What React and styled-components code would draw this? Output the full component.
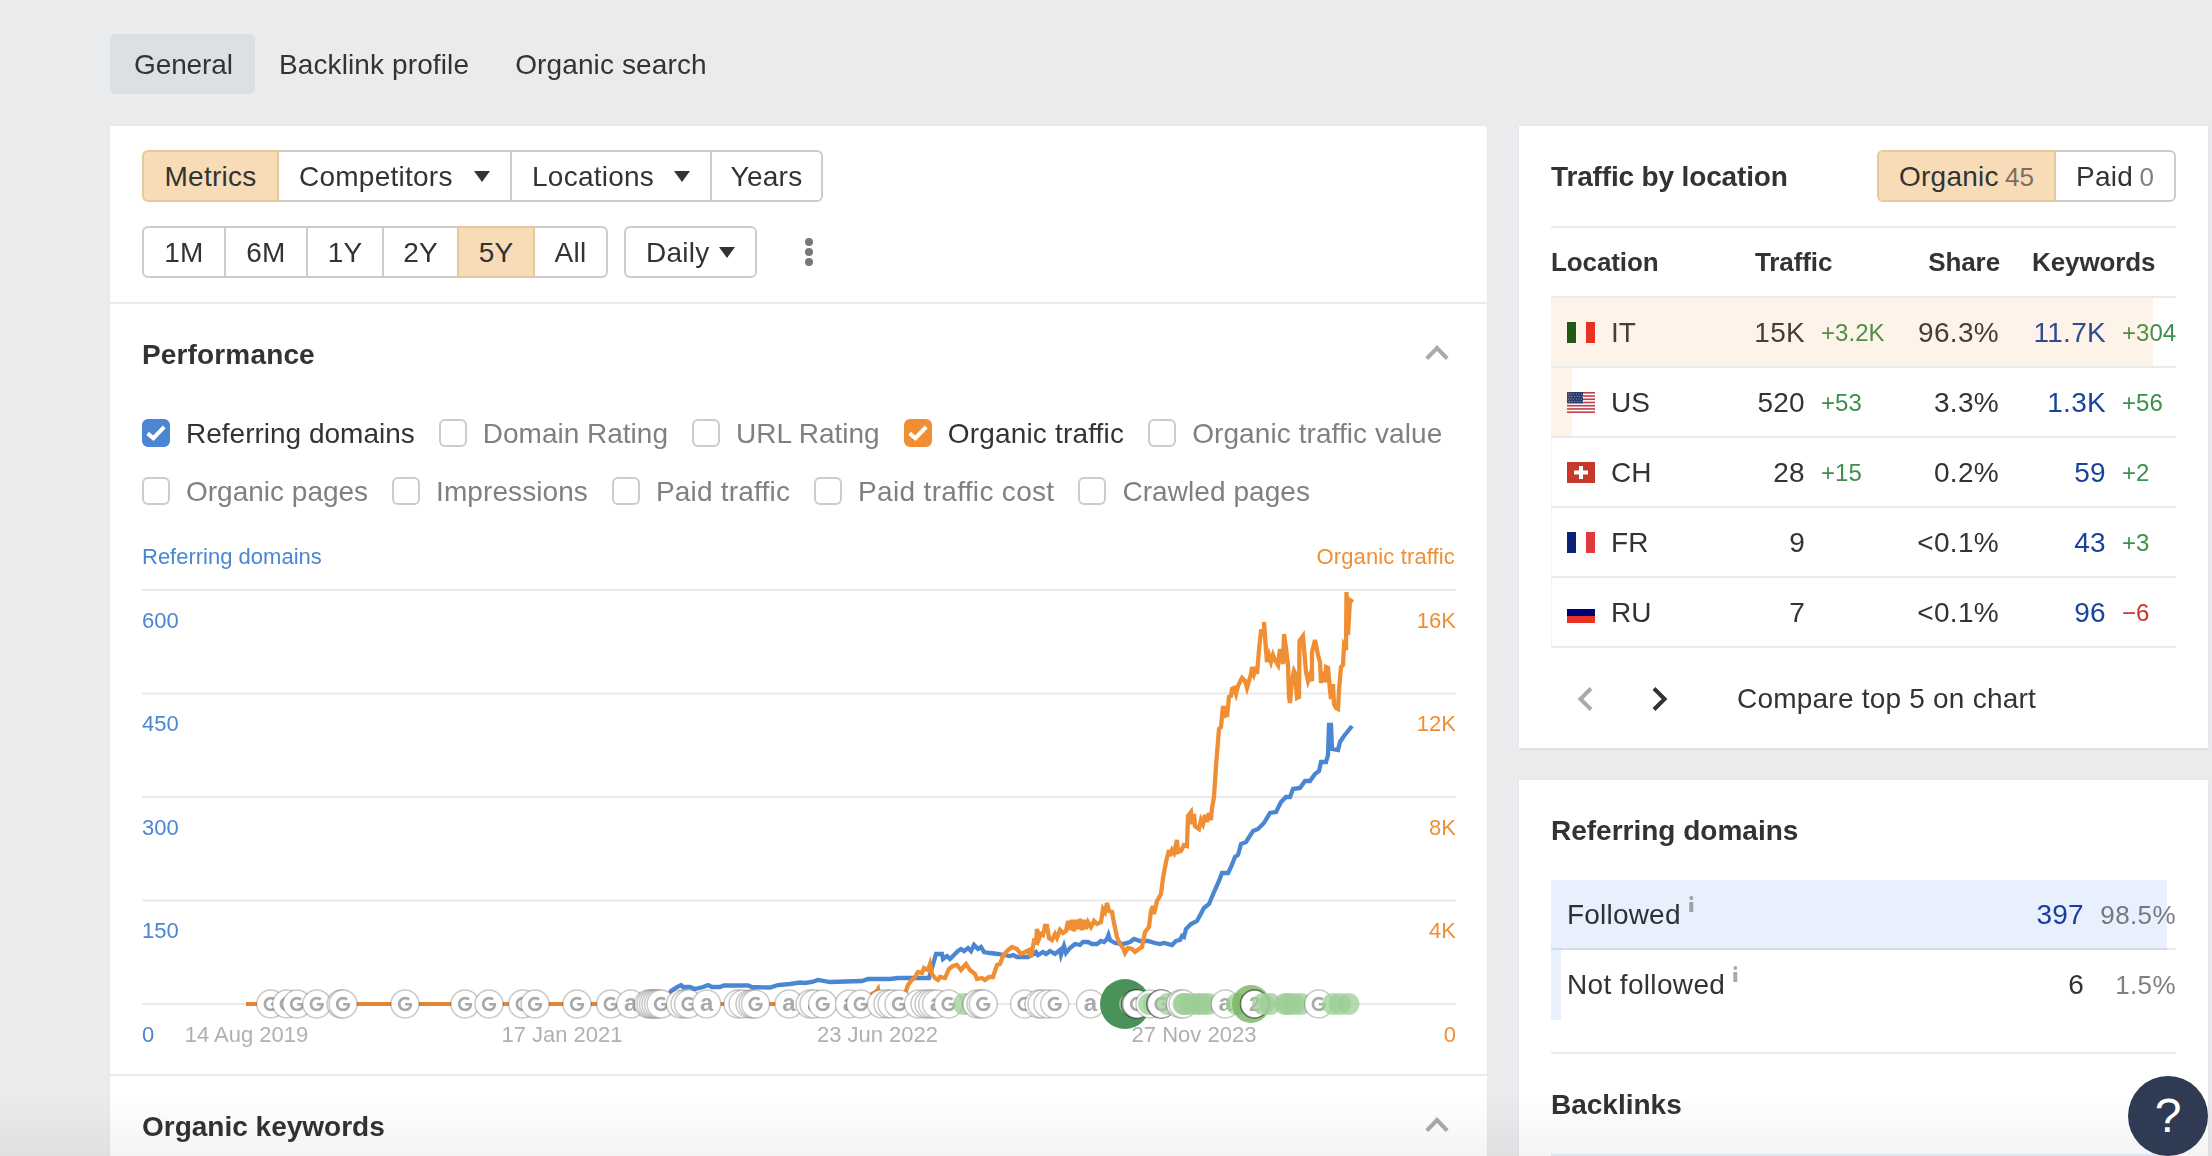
import React from 'react';
import styled, { css, createGlobalStyle } from 'styled-components';
import { FaGoogle } from 'react-icons/fa';

const GlobalStyle = createGlobalStyle`
	* {
		box-sizing: border-box;
	}
	body {
		margin: 0;
		overflow: hidden;
		background: #eaebed;
		color: #333;
		font-family: 'Liberation Sans', Arial, sans-serif;
		font-size: 28px;
		line-height: 32px;
		font-variant-ligatures: none;
		letter-spacing: 0.05px;
	}
	button {
		font: inherit;
		color: inherit;
		letter-spacing: inherit;
	}
	svg {
		display: block;
		flex-shrink: 0;
	}
`;

const Page = styled.div`
	height: 1156px;
	overflow: hidden;
	padding: 34px 4px 0 110px;
`;

const Tabs = styled.nav`
	display: flex;
	margin-bottom: 32px;
`;

const Tab = styled.a`
	height: 60px;
	padding: 0 22px 0 24px;
	line-height: 61px;
	letter-spacing: ${(props) => (props.$active ? -0.1 : 0.12)}px;
	border-radius: 5px;
	white-space: nowrap;
	background: ${(props) => (props.$active ? '#dcdfe4' : 'transparent')};
`;

const Columns = styled.div`
	display: grid;
	grid-template-columns: 1377px 689px;
	justify-content: space-between;
	align-items: start;
`;

const Side = styled.div`
	display: flex;
	flex-direction: column;
	gap: 32px;
`;

const Card = styled.section`
	background: #fff;
	box-shadow: 0 2px 0 #dfe0e2, 0 0 0 1px #e6e7ea;
`;

const Toolbar = styled.div`
	display: flex;
	flex-direction: column;
	gap: 24px;
	padding: 24px 32px;
	border-bottom: 2px solid #e9eaeb;
`;

const ToolbarRow = styled.div`
	display: flex;
	align-items: center;
	gap: 16px;
`;

const Segment = styled.div`
	display: flex;
`;

const SegmentButton = styled.button`
	position: relative;
	display: flex;
	align-items: center;
	justify-content: ${(props) => (props.$spread ? 'space-between' : 'center')};
	width: ${(props) => props.$width}px;
	height: 52px;
	padding: 1px 20px 0;
	border: 2px solid #ccc;
	background: #fff;
	white-space: nowrap;
	letter-spacing: 0.25px;

	& + & {
		margin-left: -2px;
	}
	&:first-child {
		border-radius: 6px 0 0 6px;
	}
	&:last-child {
		border-radius: 0 6px 6px 0;
	}
	&:only-child {
		border-radius: 6px;
	}
	${(props) =>
		props.$active &&
		css`
			z-index: 1;
			background: #f8dcb8;
			border-color: #e5c7a0;
		`}
`;

const Count = styled.span`
	font-size: 26px;
	letter-spacing: 0;
	color: ${(props) => (props.$active ? '#7d6f5d' : '#808080')};
`;

const DotsButton = styled.button`
	border: 0;
	background: none;
	padding: 0;
	margin-left: 32px;
`;

const SectionHeader = styled.header`
	display: flex;
	align-items: center;
	justify-content: space-between;
	height: 100px;
	padding: 0 38px 0 32px;

	svg {
		margin-bottom: 3px;
	}
`;

const Title = styled.h2`
	margin: 0;
	padding-top: 2px;
	font-size: 28px;
	line-height: 32px;
	letter-spacing: ${(props) => props.$spacing || 0}px;
`;

const Checks = styled.div`
	display: flex;
	flex-direction: column;
	gap: 30px;
	padding: 15px 32px 0;
`;

const CheckRow = styled.div`
	display: flex;
	gap: 24px;
`;

const Check = styled.label`
	display: flex;
	align-items: center;
	gap: 16px;
	height: 28px;
	white-space: nowrap;
	letter-spacing: ${(props) => props.$spacing || 0}px;
	color: ${(props) => (props.$color ? '#333' : '#808080')};
`;

const CheckText = styled.span`
	padding-top: 2px;
`;

const Box = styled.span`
	display: flex;
	align-items: center;
	justify-content: center;
	width: 28px;
	height: 28px;
	border-radius: 6px;
	border: 2px solid ${(props) => props.$color || '#ccc'};
	background: ${(props) => props.$color || '#fff'};
`;

const Legend = styled.div`
	display: flex;
	justify-content: space-between;
	margin-top: 36px;
	padding: 2px 32px 0;
	font-size: 22px;
	line-height: 28px;
	letter-spacing: 0;
`;

const Tone = styled.span`
	color: ${(props) => props.$color};
	letter-spacing: ${(props) => props.$spacing || 0}px;
`;

const ChartBox = styled.div`
	margin-top: -1px;
	padding: 0 32px 24px;
	border-bottom: 2px solid #e9eaeb;
`;

const SideHeader = styled.header`
	display: flex;
	align-items: center;
	justify-content: space-between;
	margin: 0 32px;
	padding: 24px 0;
	border-bottom: 2px solid #e9eaeb;
`;

const Table = styled.div`
	margin: 0 32px;
`;

const HeadRow = styled.div`
	display: grid;
	grid-template-columns: 204px 91px 154px 1fr;
	align-items: center;
	height: 70px;
	font-size: 26px;
	font-weight: 700;
	letter-spacing: -0.1px;
	border-bottom: 2px solid #e9eaeb;

	span:nth-child(3) {
		text-align: right;
	}
	span:nth-child(4) {
		padding-left: 32px;
	}
`;

const LocationRow = styled.div`
	position: relative;
	display: grid;
	grid-template-columns: 150px 104px 90px 104px 107px 70px;
	align-items: center;
	height: 70px;
	border-bottom: 2px solid #e9eaeb;
	white-space: nowrap;
`;

const LocationBar = styled.div`
	position: absolute;
	left: 0;
	top: 0;
	bottom: 0;
	background: rgba(240, 142, 50, 0.11);
`;

const Country = styled.div`
	display: flex;
	align-items: center;
	gap: 16px;
	padding-left: 16px;
`;

const CountryCode = styled.span`
	padding-top: 2px;
`;

const Value = styled.span`
	padding-top: 2px;
	text-align: right;
	letter-spacing: 0.3px;
	color: ${(props) => (props.$link ? '#1a439c' : '#333')};
`;

const Delta = styled.span`
	padding-left: 16px;
	padding-top: 2px;
	font-size: 24px;
	color: ${(props) => (props.$down ? '#c8352b' : '#3d8f4c')};
`;

const Pager = styled.div`
	display: flex;
	align-items: center;
	height: 100px;
	padding: 1px 0 0 58px;
`;

const PagerArrow = styled.button`
	border: 0;
	padding: 0;
	margin-right: 59px;
	background: none;
`;

const PagerLink = styled.a`
	margin-left: 10px;
	letter-spacing: 0.22px;
`;

const DomainRow = styled.div`
	position: relative;
	display: grid;
	grid-template-columns: 1fr 92px;
	align-items: center;
	height: 70px;
	padding-left: 16px;
	border-bottom: 2px solid ${(props) => (props.$last ? 'transparent' : '#e9eaeb')};
`;

const DomainBar = styled.div`
	position: absolute;
	left: 0;
	top: 0;
	bottom: -2px;
	background: #e9f0fd;
	mix-blend-mode: multiply;
`;

const DomainName = styled.div`
	display: flex;
	justify-content: space-between;
`;

const NameWithInfo = styled.span`
	display: flex;
	align-items: flex-start;
	gap: 8px;
	padding-top: 2px;
	letter-spacing: ${(props) => props.$spacing || 0.2}px;

	svg {
		margin-top: -3px;
	}
`;

const Percent = styled.span`
	padding-top: 1px;
	font-size: 26px;
	letter-spacing: 0.4px;
	text-align: right;
	color: #808080;
`;

const Divider = styled.div`
	height: 2px;
	margin: 32px 32px 0;
	background: #e9eaeb;
`;

const NextBar = styled.div`
	height: 70px;
	margin: 0 41px 0 32px;
	background: #e9f0fd;
`;

const BottomFade = styled.div`
	position: fixed;
	left: 0;
	right: 0;
	bottom: 0;
	height: 62px;
	background: linear-gradient(rgba(0, 0, 0, 0), rgba(0, 0, 0, 0.045));
	pointer-events: none;
`;

const HelpButton = styled.button`
	position: fixed;
	right: 4px;
	bottom: 0;
	width: 80px;
	height: 80px;
	border: 0;
	border-radius: 50%;
	padding: 0;
	background: #2f3a53;
	color: #fff;
	font-size: 48px;
	line-height: 50px;
`;

const BLUE = '#4a86d2';
const ORANGE = '#f08e33';

const metricRows = [
	[
		{ label: 'Referring domains', color: BLUE },
		{ label: 'Domain Rating' },
		{ label: 'URL Rating' },
		{ label: 'Organic traffic', color: ORANGE, spacing: 0.18 },
		{ label: 'Organic traffic value', spacing: 0.08 },
	],
	[
		{ label: 'Organic pages' },
		{ label: 'Impressions', spacing: 0.08 },
		{ label: 'Paid traffic', spacing: 0.2 },
		{ label: 'Paid traffic cost', spacing: 0.32 },
		{ label: 'Crawled pages', spacing: 0.06 },
	],
];

const periods = [
	{ label: '1M', width: 84 },
	{ label: '6M', width: 84 },
	{ label: '1Y', width: 78 },
	{ label: '2Y', width: 77 },
	{ label: '5Y', width: 78, active: true },
	{ label: 'All', width: 75 },
];

const locations = [
	{ code: 'IT', traffic: '15K', change: '+3.2K', share: '96.3%', bar: 96.3, keywords: '11.7K', kwChange: '+304' },
	{ code: 'US', traffic: '520', change: '+53', share: '3.3%', bar: 3.4, keywords: '1.3K', kwChange: '+56' },
	{ code: 'CH', traffic: '28', change: '+15', share: '0.2%', bar: 0.2, keywords: '59', kwChange: '+2' },
	{ code: 'FR', traffic: '9', change: '', share: '<0.1%', bar: 0.16, keywords: '43', kwChange: '+3' },
	{ code: 'RU', traffic: '7', change: '', share: '<0.1%', bar: 0.16, keywords: '96', kwChange: '−6' },
];

const gridLines = [
	{ y: 590, left: '600', right: '16K' },
	{ y: 693.4, left: '450', right: '12K' },
	{ y: 797, left: '300', right: '8K' },
	{ y: 900.4, left: '150', right: '4K' },
	{ y: 1004, left: '0', right: '0' },
];

const dates = [
	{ x: 246.5, label: '14 Aug 2019' },
	{ x: 562, label: '17 Jan 2021' },
	{ x: 877.5, label: '23 Jun 2022' },
	{ x: 1194, label: '27 Nov 2023' },
];

const bluePoints =
	'666,1004 671,991 677,987 681,985 683,987 690,987 695,989 703,987 708,985 712,987 720,987 724,985.5 748,985.5 752,987 770,987.5 778,985 790,984 800,982.5 805,983 812,982 818,980 830,982 862,981 868,979 890,979 898,978 929,978 932,968 936,954 942,954 943,959 947,956 950,959 954,955 958,951 961,949 964,951 968,948 971,951 974,945 978,949 981,947 984,952 990,953 998,954 1004,955 1010,956 1013,955 1017,957 1028,957 1032,955 1036,952 1038,955 1043,952 1046,954 1050,951 1055,954 1060,950 1061,955 1064,946 1066,953 1070,948 1075,944 1080,945 1083,942 1088,942 1092,944 1097,944 1101,941 1104,942 1107,939 1108.5,935 1110,940 1115,943 1123,944 1130,942 1134,939 1140,941 1148,941 1155,943 1160,944 1164,943 1172,945 1176,941 1180,940 1182,936 1184,937 1186,929 1191,924 1197,921 1204,908 1209,904 1214,892 1219,881 1222,873 1228,873 1231,867 1235,857 1238,855 1241,844 1246,842 1253,831 1258,829 1264,823 1270,813 1276,812 1281,802 1286,797 1290,797 1293,789 1300,788 1305,781 1310,781 1315,774 1319,771 1321,762 1326,762 1328,755 1329,725 1331,725 1332,749 1338,750 1340,742 1344,736 1348,731 1352,726';

const orangePoints =
	'866,1004 872,994 876,992 878,989 879,996 884,996 888,992 892,993 898,994 905,994 908,985 911,981 915,977 918,972 922,973 924,968 928,970 930,964 932,974 935,978 938,980 940,977 945,978 949,969 953,966 957,965 961,970 966,964 970,970 975,974 977,979 982,978 985,980 989,977 993,977 997,965 1000,964 1003,956 1007,951 1012,947 1017,949 1021,954 1025,952 1029,950 1031,957 1034,941 1036,942 1037,929 1039,939 1041,934 1043,935 1045,926 1047,926 1049,938 1052,940 1055,934 1057,938 1060,930 1063,933 1066,931 1068,921 1070,930 1072,920 1074,931 1076,920 1078,929 1080,919 1082,930 1084,920 1086,929 1088,922 1091,927 1094,921 1097,924 1101,922 1103,909 1105,912 1107,903 1109,911 1112,912 1114,923 1117,937 1120,944 1123,948 1125,953 1128,948 1132,949 1135,952 1139,949 1142,947 1145,932 1149,927 1151,911 1153,906 1154,914 1157,901 1161,894 1163,878 1166,862 1169,850 1170,856 1172,850 1174,853 1177,840 1178,852 1181,851 1184,845 1187,846 1188,816 1191,812 1192,824 1194,814 1195,826 1199,829 1201,820 1203,824 1205,815 1207,822 1209,813 1211,820 1212,808 1214,797 1216,766 1219,729 1221,727 1223,706 1224,718 1226,706 1227,717 1229,697 1231,696 1232,689 1234,688 1236,694 1238,686 1242,678 1245,681 1247,688 1251,674 1252,667 1254,674 1256,667 1257,674 1259,650 1261,631 1264,630 1264,622 1266,650 1267,662 1269,655 1271,662 1273,655 1275,660 1278,665 1280,649 1283,664 1284,634 1286,648 1288,665 1289,697 1290,703 1292,680 1294,671 1295,673 1297,698 1299,697 1299.5,641 1303,636 1306,672 1308,681 1310,675 1312,681 1312,652 1315,640 1318,655 1320,662 1321,683 1323,672 1325,682 1326,667 1328,668 1330,690 1331,699 1333,684 1334,704 1336,708 1338,709 1339,690 1341,667 1343,665 1344,646 1346,650 1346.5,592 1348,635 1350,600 1353,602';

// kind: g = google update, a = ahrefs note, o = covered pin, 2 = group
// c = green event, big = large one, mid = medium one
const markers = [
	['g', 270.7], ['g', 286.7], ['g', 297], ['g', 316.7], ['o', 341], ['g', 343], ['g', 405], ['g', 465], ['g', 489],
	['g', 522.7], ['g', 535], ['g', 577], ['g', 610.7], ['a', 630.7], ['o', 648.7], ['o', 651], ['o', 653.5],
	['o', 656], ['o', 658.5], ['g', 661], ['o', 680.5], ['g', 685], ['g', 688.5], ['a', 706.7], ['o', 738],
	['g', 743], ['o', 750], ['o', 753], ['g', 755.5], ['a', 789], ['o', 810], ['a', 814], ['g', 822.7], ['a', 849.5],
	['g', 860.7], ['a', 881.5], ['o', 888], ['o', 892], ['g', 899], ['g', 918.5], ['o', 925], ['o', 929],
	['o', 932.7], ['a', 936.5], ['g', 948.5], ['c', 964], ['o', 977], ['o', 981], ['g', 983.3], ['g', 1024.5],
	['o', 1039], ['g', 1042], ['o', 1048], ['g', 1054.7], ['a', 1090.5], ['big', 1125], ['c', 1130], ['dark', 1135.7],
	['g', 1137], ['o', 1150], ['c', 1149], ['c', 1154], ['dark', 1161], ['g', 1161.5], ['c', 1168],
	['o', 1180.5], ['o', 1183], ['c', 1183.5], ['c', 1185], ['c', 1192], ['c', 1198], ['c', 1203], ['c', 1208],
	['a', 1225.3], ['c', 1237], ['mid', 1251], ['2', 1254.5], ['c', 1263], ['c', 1270], ['c', 1285], ['c', 1288],
	['c', 1294], ['c', 1301], ['g', 1318.7], ['c', 1333], ['c', 1340], ['c', 1348.5],
];

function Caret() {
	return (
		<svg width="16" height="11" viewBox="0 0 16 11">
			<path d="M0 0H16L8 11Z" fill="#333" />
		</svg>
	);
}

function Collapse() {
	return (
		<svg width="24" height="17" viewBox="0 0 24 17">
			<path d="M1.8 14.6L12 4L22.2 14.6" fill="none" stroke="#aaa" strokeWidth="4" />
		</svg>
	);
}

function Arrow({ next }) {
	return (
		<svg width="16" height="24" viewBox="0 0 16 24">
			<path
				d={next ? 'M2 1.5L12.6 12L2 22.5' : 'M14 1.5L3.4 12L14 22.5'}
				fill="none"
				stroke={next ? '#333' : '#aaa'}
				strokeWidth="4"
			/>
		</svg>
	);
}

function InfoIcon() {
	return (
		<svg width="5" height="17" viewBox="0 0 5 17">
			<circle cx="2.3" cy="2" r="2" fill="#aaa" />
			<path d="M0.3 6H4.3V16H0.3Z" fill="#aaa" />
		</svg>
	);
}

function Flag({ code }) {
	return (
		<svg width="28" height="21" viewBox="0 0 28 21">
			{code === 'IT' && (
				<>
					<path d="M0 0H9V21H0Z" fill="#0a5412" />
					<path d="M9 0H19V21H9Z" fill="#fff" />
					<path d="M19 0H28V21H19Z" fill="#e92522" />
				</>
			)}
			{code === 'FR' && (
				<>
					<path d="M0 0H9V21H0Z" fill="#0b2377" />
					<path d="M9 0H19V21H9Z" fill="#fff" />
					<path d="M19 0H28V21H19Z" fill="#e1393e" />
				</>
			)}
			{code === 'RU' && (
				<>
					<path d="M0 7H28V14H0Z" fill="#00007b" />
					<path d="M0 14H28V21H0Z" fill="#ea3323" />
				</>
			)}
			{code === 'CH' && (
				<>
					<path d="M0 0H28V21H0Z" fill="#c53a2a" />
					<path d="M12 4H16V8.5H21V12.5H16V17H12V12.5H7V8.5H12Z" fill="#fff" />
				</>
			)}
			{code === 'US' && (
				<>
					<path d="M0 0H28V21H0Z" fill="#fff" />
					{[0, 1, 2, 3, 4, 5, 6].map((i) => (
						<rect key={i} x="0" y={i * 3.23} width="28" height="1.6" fill="#bf3f4a" />
					))}
					<path d="M0 0H16V11.3H0Z" fill="#2b3a6b" />
					<path
						d="M1 2H16M2 4.5H16M1 7H16M2 9.5H16"
						stroke="#8d96b8"
						strokeWidth="1"
						strokeDasharray="1 1.6"
					/>
				</>
			)}
		</svg>
	);
}

function Marker({ kind, x }) {
	if (kind === 'c') {
		return <circle cx={x} cy="1004" r="11" fill="#9ccd95" fillOpacity="0.75" />;
	}
	if (kind === 'big') {
		return <circle cx={x} cy="1004" r="25" fill="#4a915a" />;
	}
	if (kind === 'mid') {
		return <circle cx={x} cy="1004" r="19" fill="#74b35c" fillOpacity="0.78" />;
	}
	const dark = kind === 'dark' || kind === '2';
	return (
		<g>
			<circle
				cx={x}
				cy="1004"
				r="14"
				fill="#fff"
				stroke="#000"
				strokeOpacity={dark ? 0.5 : 0.21}
				strokeWidth="1.5"
			/>
			{kind === 'g' && <FaGoogle x={x - 7.5} y={996.5} size={15} color="#aaa" />}
			{(kind === 'a' || kind === '2') && (
				<text x={x} y="1011" textAnchor="middle" fontSize={kind === 'a' ? 24 : 20} fontWeight="700" fill="#aaa">
					{kind}
				</text>
			)}
		</g>
	);
}

function Chart() {
	return (
		<svg width="1314" height="480" viewBox="142 570 1314 480" fontSize="22" letterSpacing="0">
			{gridLines.map((line) => (
				<g key={line.y}>
					<path d={`M142 ${line.y}H1456`} stroke="#e9e9ea" strokeWidth="2" />
					<text x="142" y={Math.floor(line.y) + 38} fill={BLUE}>
						{line.left}
					</text>
					<text x="1456" y={Math.floor(line.y) + 38} fill={ORANGE} textAnchor="end">
						{line.right}
					</text>
				</g>
			))}
			<polyline points={bluePoints} fill="none" stroke={BLUE} strokeWidth="4.3" />
			<path d="M246 1004H866" stroke="#e38531" strokeWidth="4" />
			<polyline points={orangePoints} fill="none" stroke={ORANGE} strokeWidth="4.3" />
			{markers.map(([kind, x], i) => (
				<Marker key={i} kind={kind} x={x} />
			))}
			{dates.map((date) => (
				<text key={date.label} x={date.x} y="1042" fill="#b0b0b0" textAnchor="middle">
					{date.label}
				</text>
			))}
		</svg>
	);
}

function App() {
	return (
		<>
			<GlobalStyle />
			<Page>
				<Tabs>
					<Tab $active>General</Tab>
					<Tab>Backlink profile</Tab>
					<Tab>Organic search</Tab>
				</Tabs>
				<Columns>
					<Card>
						<Toolbar>
							<Segment>
								<SegmentButton $active $width={137}>
									Metrics
								</SegmentButton>
								<SegmentButton $spread $width={235}>
									Competitors <Caret />
								</SegmentButton>
								<SegmentButton $spread $width={202}>
									Locations <Caret />
								</SegmentButton>
								<SegmentButton $width={113}>Years</SegmentButton>
							</Segment>
							<ToolbarRow>
								<Segment>
									{periods.map((period) => (
										<SegmentButton key={period.label} $width={period.width} $active={period.active}>
											{period.label}
										</SegmentButton>
									))}
								</Segment>
								<Segment>
									<SegmentButton $spread $width={133}>
										Daily <Caret />
									</SegmentButton>
								</Segment>
								<DotsButton>
									<svg width="8" height="28" viewBox="0 0 8 28" fill="#777">
										<circle cx="4" cy="4" r="4" />
										<circle cx="4" cy="14" r="4" />
										<circle cx="4" cy="24" r="4" />
									</svg>
								</DotsButton>
							</ToolbarRow>
						</Toolbar>
						<SectionHeader>
							<Title $spacing={0.15}>Performance</Title>
							<Collapse />
						</SectionHeader>
						<Checks>
							{metricRows.map((row, i) => (
								<CheckRow key={i}>
									{row.map((metric) => (
										<Check key={metric.label} $color={metric.color} $spacing={metric.spacing}>
											<Box $color={metric.color}>
												{metric.color && (
													<svg width="20" height="16" viewBox="0 0 20 16">
														<path
															d="M1.6 8.4L7.4 13.2L18.2 1.8"
															fill="none"
															stroke="#fff"
															strokeWidth="4"
														/>
													</svg>
												)}
											</Box>
											<CheckText>{metric.label}</CheckText>
										</Check>
									))}
								</CheckRow>
							))}
						</Checks>
						<Legend>
							<Tone $color={BLUE}>Referring domains</Tone>
							<Tone $color={ORANGE} $spacing={0.13}>
								Organic traffic
							</Tone>
						</Legend>
						<ChartBox>
							<Chart />
						</ChartBox>
						<SectionHeader>
							<Title>Organic keywords</Title>
							<Collapse />
						</SectionHeader>
					</Card>
					<Side>
						<Card>
							<SideHeader>
								<Title $spacing={-0.15}>Traffic by location</Title>
								<Segment>
									<SegmentButton $active $spread $width={179}>
										Organic <Count $active>45</Count>
									</SegmentButton>
									<SegmentButton $spread $width={122}>
										Paid <Count>0</Count>
									</SegmentButton>
								</Segment>
							</SideHeader>
							<Table>
								<HeadRow>
									<span>Location</span>
									<span>Traffic</span>
									<span>Share</span>
									<span>Keywords</span>
								</HeadRow>
								{locations.map((item) => (
									<LocationRow key={item.code}>
										<Country>
											<Flag code={item.code} />
											<CountryCode>{item.code}</CountryCode>
										</Country>
										<Value>{item.traffic}</Value>
										<Delta>{item.change}</Delta>
										<Value>{item.share}</Value>
										<Value $link>{item.keywords}</Value>
										<Delta $down={item.kwChange.startsWith('−')}>{item.kwChange}</Delta>
										<LocationBar style={{ width: `${item.bar}%` }} />
									</LocationRow>
								))}
							</Table>
							<Pager>
								<PagerArrow>
									<Arrow />
								</PagerArrow>
								<PagerArrow>
									<Arrow next />
								</PagerArrow>
								<PagerLink>Compare top 5 on chart</PagerLink>
							</Pager>
						</Card>
						<Card>
							<SectionHeader>
								<Title>Referring domains</Title>
							</SectionHeader>
							<Table>
								<DomainRow>
									<DomainName>
										<NameWithInfo>
											Followed <InfoIcon />
										</NameWithInfo>
										<Value $link>397</Value>
									</DomainName>
									<Percent>98.5%</Percent>
									<DomainBar style={{ width: '98.5%' }} />
								</DomainRow>
								<DomainRow $last>
									<DomainName>
										<NameWithInfo $spacing={0.35}>
											Not followed <InfoIcon />
										</NameWithInfo>
										<Value>6</Value>
									</DomainName>
									<Percent>1.5%</Percent>
									<DomainBar style={{ width: '1.6%' }} />
								</DomainRow>
							</Table>
							<Divider />
							<SectionHeader>
								<Title>Backlinks</Title>
							</SectionHeader>
							<NextBar />
						</Card>
					</Side>
				</Columns>
			</Page>
			<BottomFade />
			<HelpButton>?</HelpButton>
		</>
	);
}

export default App;
